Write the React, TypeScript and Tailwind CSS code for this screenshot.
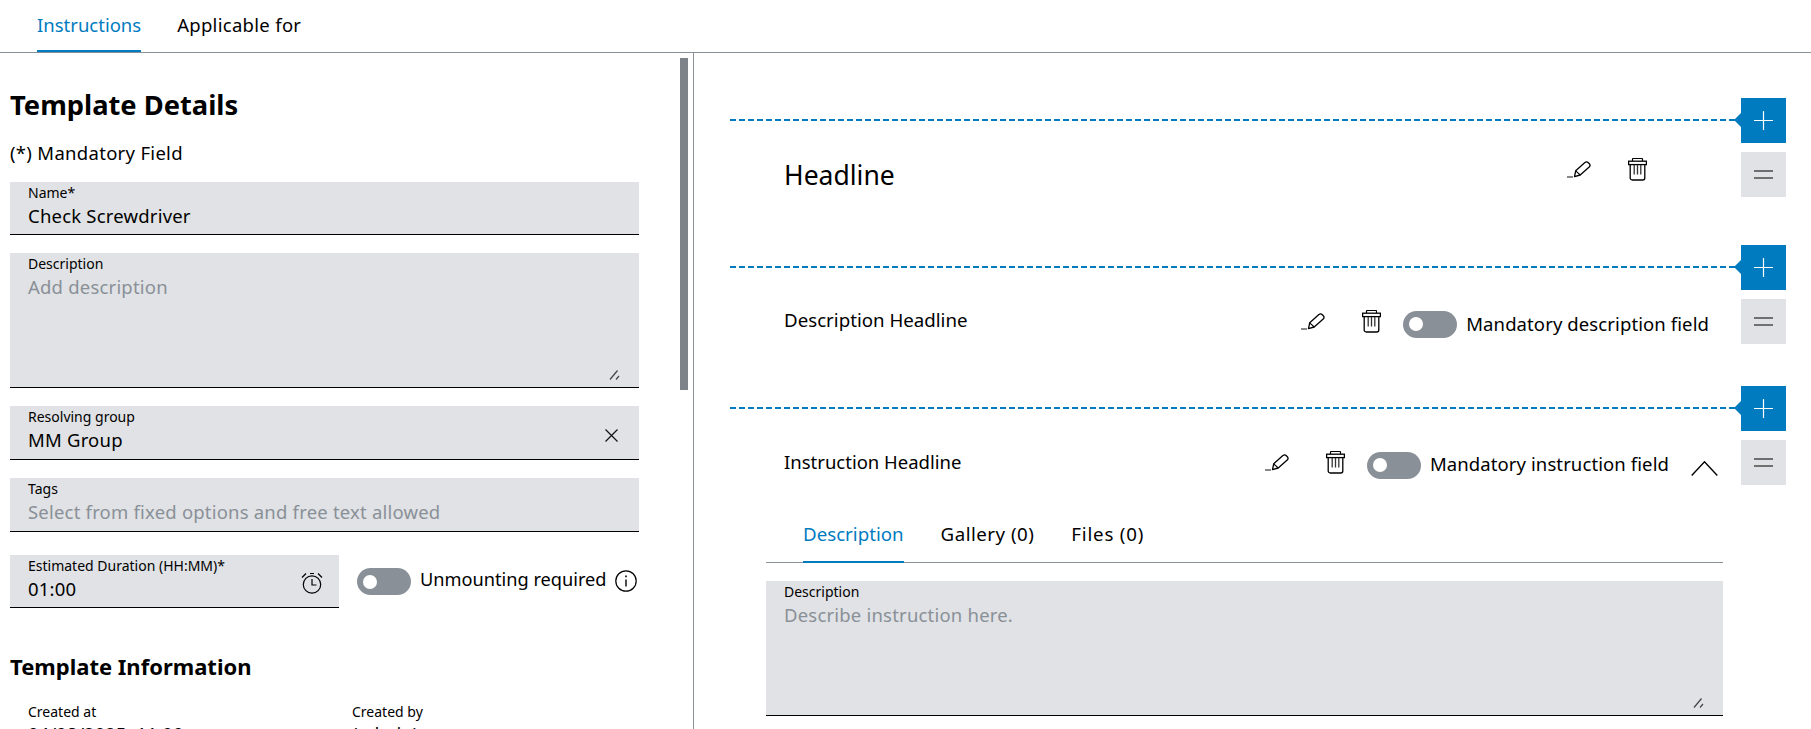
function PencilIcon() {
  return (
    <svg width="24" height="17" viewBox="0 0 24 17" fill="none" className="shrink-0">
      <path d="M0 16h6" stroke="#555" strokeWidth="1.4" />
      <path
        d="M7.5 15.6 8.7 9.8 17.9 1.6a2.4 2.4 0 0 1 3.4.1l1 1.1a2.4 2.4 0 0 1-.1 3.3L13.2 14Z"
        stroke="#000"
        strokeWidth="1.3"
        strokeLinejoin="round"
      />
      <path d="M8.7 9.8 13.2 14" stroke="#000" strokeWidth="1.1" />
    </svg>
  );
}

function TrashIcon() {
  return (
    <svg width="19" height="23" viewBox="0 0 19 23" fill="none" className="shrink-0">
      <path d="M4.5 3.2V1.2a.7.7 0 0 1 .7-.7h8.6a.7.7 0 0 1 .7.7v2" stroke="#000" strokeWidth="1.2" />
      <rect x="0.6" y="3.2" width="17.8" height="3.4" fill="#fff" stroke="#000" strokeWidth="1.3" />
      <path d="M2.2 6.6V20a2 2 0 0 0 2 2h10.6a2 2 0 0 0 2-2V6.6" stroke="#000" strokeWidth="1.3" />
      <path d="M6.2 7v9.5M9.5 7v9.5M12.8 7v9.5" stroke="#333" strokeWidth="1.3" />
    </svg>
  );
}

function ClockIcon() {
  return (
    <svg width="22" height="22" viewBox="0 0 22 22" fill="none" className="shrink-0">
      <circle cx="11" cy="12.5" r="8.7" stroke="#000" strokeWidth="1.2" />
      <path d="M11 7v6h4.5" stroke="#000" strokeWidth="1.2" />
      <path d="M1 5.5 5 1.5M21 5.5 17 1.5M9 1.5h4" stroke="#000" strokeWidth="1.2" />
    </svg>
  );
}

function InfoIcon() {
  return (
    <svg width="22" height="22" viewBox="0 0 22 22" fill="none" className="shrink-0">
      <circle cx="11" cy="11" r="10.2" stroke="#000" strokeWidth="1.2" />
      <path d="M11 9.5v7" stroke="#000" strokeWidth="1.4" />
      <path d="M11 5.5v1.8" stroke="#000" strokeWidth="1.6" />
    </svg>
  );
}

function ResizeHandle() {
  return (
    <svg width="11" height="10" viewBox="0 0 11 10" fill="none" className="absolute right-[19px] bottom-[7px]">
      <path d="M1 9.5 8.5 .5M7 9.5 10 6" stroke="#444" strokeWidth="1.2" />
    </svg>
  );
}

function Toggle() {
  return (
    <div className="w-[54px] h-[27px] shrink-0 rounded-full bg-[#8a9097] flex items-center pl-[6px]">
      <div className="w-[14px] h-[14px] rounded-full bg-white" />
    </div>
  );
}

function Field({
  label,
  value,
  placeholder,
  className,
  children,
}: {
  label: string;
  value?: string;
  placeholder?: string;
  className?: string;
  children?: React.ReactNode;
}) {
  return (
    <div className={["relative bg-[#e0e2e5] border-b border-black pl-[18px] pt-px shrink-0", className].filter(Boolean).join(" ")}>
      <div className="text-[14px] leading-[20px] text-black whitespace-nowrap">{label}</div>
      <div
        className={[
          "text-[18.5px] leading-[24px] mt-px tracking-[0.2px] whitespace-nowrap",
          value ? "text-black" : "text-[#8a9097]",
        ].join(" ")}
      >
        {value ?? placeholder}
      </div>
      {children}
    </div>
  );
}

function AddRemoveButtons() {
  return (
    <div className="w-[45px] shrink-0 flex flex-col gap-[9px]">
      <button className="relative w-[45px] h-[45px] bg-[#007bc0] flex items-center justify-center">
        <svg width="7" height="14" viewBox="0 0 7 14" className="absolute -left-[7px] top-[15px]">
          <path d="M7 0v14L0 7Z" fill="#007bc0" />
        </svg>
        <svg width="19" height="19" viewBox="0 0 19 19" fill="none">
          <path d="M9.5 0v19M0 9.5h19" stroke="#fff" strokeWidth="1.2" />
        </svg>
      </button>
      <button className="w-[45px] h-[45px] bg-[#e0e2e5] flex items-center justify-center">
        <svg width="19" height="9" viewBox="0 0 19 9" fill="none">
          <path d="M0 1h19" stroke="#222" strokeWidth="1.2" />
          <path d="M0 8h19" stroke="#555" strokeWidth="1.6" />
        </svg>
      </button>
    </div>
  );
}

function DashedLine() {
  return (
    <div className="h-[45px] flex items-center pr-[6px]">
      <div className="w-full h-[2px] mb-px bg-[repeating-linear-gradient(90deg,#007bc0_0,#007bc0_6px,transparent_6px,transparent_9px)]" />
    </div>
  );
}

function Section({ children, className }: { children: React.ReactNode; className?: string }) {
  return (
    <section className={["flex items-start pl-[36px] pr-[25px]", className].filter(Boolean).join(" ")}>
      <div className="flex-1 min-w-0">
        <DashedLine />
        {children}
      </div>
      <AddRemoveButtons />
    </section>
  );
}

function RowIcons({ className }: { className?: string }) {
  return (
    <div className={["flex items-center gap-[37px]", className].filter(Boolean).join(" ")}>
      <PencilIcon />
      <TrashIcon />
    </div>
  );
}

export default function App() {
  return (
    <div className="w-[1811px] h-[729px] overflow-hidden bg-white text-black font-['Noto_Sans',sans-serif] flex flex-col">
      <div className="h-[53px] shrink-0 border-b border-[#8a9097] flex pl-[37px] gap-[36px] text-[18.5px]">
        <div className="h-[52px] flex items-center text-[#007bc0] border-b-[2px] border-[#007bc0] pb-px">Instructions</div>
        <div className="h-[49px] flex items-center tracking-[0.3px]">Applicable for</div>
      </div>

      <div className="flex-1 min-h-0 flex">
        <div className="w-[694px] shrink-0 border-r border-[#8a9097] flex pl-[10px] overflow-hidden">
          <div className="w-[629px] shrink-0 flex flex-col pt-[37px]">
            <h1 className="text-[27.3px] leading-[30px] font-bold h-[30px]">Template Details</h1>
            <div className="text-[18.5px] leading-[24px] mt-[21px] tracking-[0.3px]">(*) Mandatory Field</div>

            <Field label="Name*" value="Check Screwdriver" className="h-[53px] mt-[17px]" />
            <Field label="Description" placeholder="Add description" className="h-[135px] mt-[18px]">
              <ResizeHandle />
            </Field>
            <Field label="Resolving group" value="MM Group" className="h-[54px] mt-[18px]">
              <svg width="13" height="13" viewBox="0 0 13 13" fill="none" className="absolute right-[21px] top-[23px]">
                <path d="M.5.5l12 12M12.5.5l-12 12" stroke="#111" strokeWidth="1.2" />
              </svg>
            </Field>
            <Field label="Tags" placeholder="Select from fixed options and free text allowed" className="h-[54px] mt-[18px]" />

            <div className="flex items-center mt-[23px]">
              <Field label="Estimated Duration (HH:MM)*" value="01:00" className="w-[329px] h-[53px]">
                <div className="absolute right-[16px] top-[17px]">
                  <ClockIcon />
                </div>
              </Field>
              <div className="ml-[18px]">
                <Toggle />
              </div>
              <span className="ml-[9px] text-[18.2px] mb-[4px] whitespace-nowrap">Unmounting required</span>
              <div className="ml-[8px] mb-[2px]">
                <InfoIcon />
              </div>
            </div>

            <h2 className="text-[22px] leading-[28px] font-bold mt-[44px]">Template Information</h2>
            <div className="grid grid-cols-[324px_1fr] pl-[18px] mt-[22px] text-[14px]">
              <div>
                <div className="leading-[20px]">Created at</div>
                <div className="leading-[24px] text-[18.5px]">04/08/2025, 11:00</div>
              </div>
              <div>
                <div className="leading-[20px]">Created by</div>
                <div className="leading-[24px] text-[18.5px]">(admin)</div>
              </div>
            </div>
          </div>
          <div className="w-[8px] h-[332px] shrink-0 ml-[41px] mt-[5px] bg-[#7d8389]" />
        </div>

        <div className="flex-1 min-w-0 pt-[45px] overflow-hidden">
          <Section className="mb-[48px]">
            <div className="mt-[9px] h-[45px] flex items-center pl-[54px] pr-[94px] justify-between">
              <div className="text-[26.5px] leading-[48px]">Headline</div>
              <RowIcons className="mb-[11px]" />
            </div>
          </Section>

          <Section className="mb-[42px]">
            <div className="mt-[9px] h-[45px] flex items-center pl-[54px] pr-[32px] text-[18.5px]">
              <div className="flex-1 mb-[2px] text-[18.7px]">Description Headline</div>
              <RowIcons />
              <div className="ml-[22px] mt-[5px]">
                <Toggle />
              </div>
              <span className="ml-[9px] mt-[5px] tracking-[0.1px]">Mandatory description field</span>
            </div>
          </Section>

          <Section>
            <div className="mt-[9px] h-[45px] flex items-center pl-[54px] pr-[23px] text-[18.5px]">
              <div className="flex-1 mb-[2px]">Instruction Headline</div>
              <RowIcons />
              <div className="ml-[22px] mt-[5px]">
                <Toggle />
              </div>
              <span className="ml-[9px] mt-[3px] tracking-[0.1px]">Mandatory instruction field</span>
              <svg width="27" height="15" viewBox="0 0 27 15" fill="none" className="ml-[22px] mt-[11px] shrink-0">
                <path d="M.7 14.5 13.5.8l12.8 13.7" stroke="#000" strokeWidth="1.4" />
              </svg>
            </div>

            <div className="ml-[36px] mr-[18px]">
              <div className="h-[78px] border-b-[1.5px] border-[#8a9097] flex items-end pl-[37px] gap-[37px] text-[18.7px]">
                <div className="h-[52px] flex items-center pb-[3px] text-[#007bc0] border-b-[2px] border-[#007bc0] -mb-px">Description</div>
                <div className="h-[52px] flex items-center pb-[3px] tracking-[0.5px]">Gallery (0)</div>
                <div className="h-[52px] flex items-center pb-[3px] tracking-[0.8px]">Files (0)</div>
              </div>
              <Field label="Description" placeholder="Describe instruction here." className="h-[135px] mt-[18px]">
                <ResizeHandle />
              </Field>
            </div>
          </Section>
        </div>
      </div>
    </div>
  );
}
